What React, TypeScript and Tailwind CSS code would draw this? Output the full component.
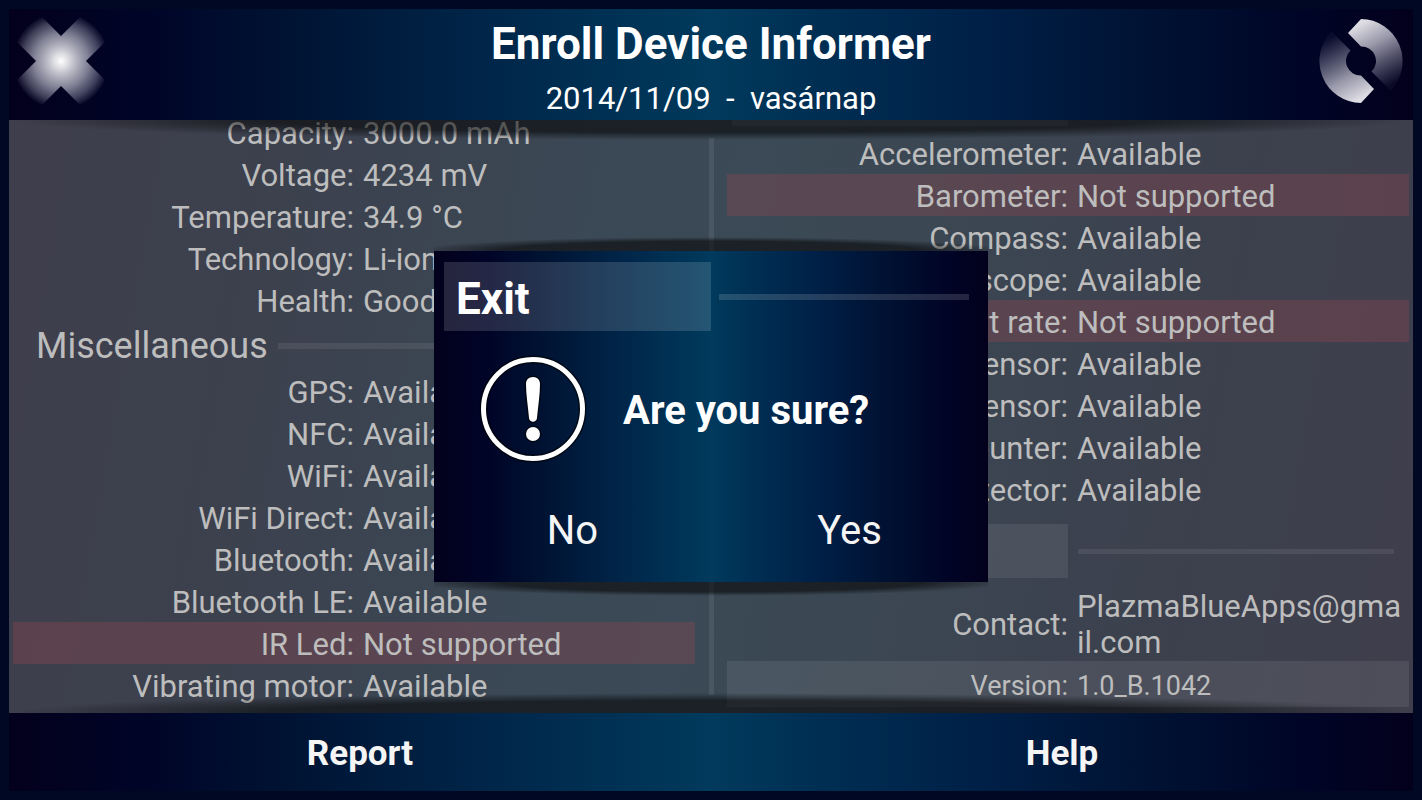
type Entry = {
  label: string;
  value: string;
  missing?: boolean;
};

const BATTERY: Entry[] = [
  { label: "Capacity", value: "3000.0 mAh" },
  { label: "Voltage", value: "4234 mV" },
  { label: "Temperature", value: "34.9 °C" },
  { label: "Technology", value: "Li-ion" },
  { label: "Health", value: "Good" },
];

const MISC: Entry[] = [
  { label: "GPS", value: "Available" },
  { label: "NFC", value: "Available" },
  { label: "WiFi", value: "Available" },
  { label: "WiFi Direct", value: "Available" },
  { label: "Bluetooth", value: "Available" },
  { label: "Bluetooth LE", value: "Available" },
  { label: "IR Led", value: "Not supported", missing: true },
  { label: "Vibrating motor", value: "Available" },
];

const SENSORS: Entry[] = [
  { label: "Accelerometer", value: "Available" },
  { label: "Barometer", value: "Not supported", missing: true },
  { label: "Compass", value: "Available" },
  { label: "Gyroscope", value: "Available" },
  { label: "Heart rate", value: "Not supported", missing: true },
  { label: "Light sensor", value: "Available" },
  { label: "Prox. sensor", value: "Available" },
  { label: "Step counter", value: "Available" },
  { label: "Step detector", value: "Available" },
];

const panelGradient =
  "bg-[linear-gradient(90deg,#03001c_0%,#000528_10%,#001333_20%,#002346_32%,#003053_42%,#003a5c_50%,#002e53_58%,#002047_69%,#001132_82%,#000527_92%,#03001c_100%)]";

function EntryList({ entries }: { entries: Entry[] }) {
  return (
    <dl>
      {entries.map((entry) => (
        <div
          key={entry.label}
          className={`grid h-[42px] grid-cols-2 items-center pt-1 text-[31px] leading-9 whitespace-nowrap ${
            entry.missing ? "bg-[#b44650]/25" : ""
          }`}
        >
          <dt className="text-right">{entry.label}:</dt>
          <dd className="pl-[9px]">{entry.value}</dd>
        </div>
      ))}
    </dl>
  );
}

function CloseIcon() {
  return (
    <svg viewBox="-48 -48 96 96" className="size-24" aria-hidden>
      <defs>
        <radialGradient id="close-fill" gradientUnits="userSpaceOnUse" cx="0" cy="0" r="49">
          <stop offset="0" stopColor="#fff" />
          <stop offset="0.15" stopColor="#dcdce2" />
          <stop offset="0.55" stopColor="#b4b4c4" stopOpacity="0.72" />
          <stop offset="0.8" stopColor="#a8a8bc" stopOpacity="0.38" />
          <stop offset="1" stopColor="#a0a0b4" stopOpacity="0" />
        </radialGradient>
      </defs>
      <path
        fill="url(#close-fill)"
        d="M0-25 19-44A48 48 0 0 1 44-19L25 0 44 19A48 48 0 0 1 19 44L0 25-19 44A48 48 0 0 1-44 19L-25 0-44-19A48 48 0 0 1-19-44Z"
      />
    </svg>
  );
}

function RefreshIcon() {
  const half = "M0-42-13-28 0-14.5A14.5 14.5 0 0 1 10.5 10.5L29.5 29.5A42 42 0 0 0 0-42Z";
  return (
    <svg viewBox="-48 -48 96 96" className="size-24" aria-hidden>
      <defs>
        <linearGradient id="refresh-fill" gradientUnits="userSpaceOnUse" x1="-6" y1="-34" x2="26" y2="26">
          <stop offset="0" stopColor="#dedde4" />
          <stop offset="0.35" stopColor="#b4b3c2" stopOpacity="0.85" />
          <stop offset="0.7" stopColor="#9a99ae" stopOpacity="0.45" />
          <stop offset="1" stopColor="#8c8ca6" stopOpacity="0.06" />
        </linearGradient>
      </defs>
      <path fill="url(#refresh-fill)" d={half} />
      <path fill="url(#refresh-fill)" d={half} transform="rotate(180)" />
    </svg>
  );
}

function WarningIcon() {
  return (
    <svg viewBox="-54 -54 108 108" className="size-[108px]" aria-hidden>
      <circle r="49.5" fill="none" stroke="#000" strokeOpacity="0.6" strokeWidth="8" />
      <circle r="49.5" fill="none" stroke="#fff" strokeWidth="5" />
      <g fill="#fff" stroke="#000" strokeOpacity="0.6" strokeWidth="3" paintOrder="stroke">
        <path d="M0-32C4.500-32 7-29 7-25C7-14 5-3 4 9C3.500 14-3.500 14-4 9C-5-3-7-14-7-25C-7-29-4.500-32 0-32Z" />
        <circle cy="25" r="7" />
      </g>
    </svg>
  );
}

export default function App() {
  return (
    <div className="flex h-screen flex-col bg-[#000823] p-[9px] font-[Roboto,sans-serif] text-white">
      <header className={`flex h-[111px] shrink-0 items-start justify-between p-1 ${panelGradient}`}>
        <button type="button" aria-label="Exit">
          <CloseIcon />
        </button>
        <div className="text-center">
          <h1 className="text-[44px] leading-[62px] font-bold">Enroll Device Informer</h1>
          <p className="text-[31px] leading-[48px] whitespace-pre">2014/11/09  -  vasárnap</p>
        </div>
        <button type="button" aria-label="Refresh">
          <RefreshIcon />
        </button>
      </header>

      <main className="relative min-h-0 flex-1 overflow-hidden bg-[linear-gradient(100deg,#3f3e4c_0%,#3c414e_20%,#3b4855_40%,#3b4a56_50%,#3b4753_62%,#3c414e_80%,#3f3e4c_100%)]">
        <div className="flex h-full px-1 text-[#bdbdbd]">
          <section className="-mt-[9px] flex-1">
            <EntryList entries={BATTERY} />
            <div className="flex h-[49px] items-center pr-[15px] pl-[23px]">
              <h2 className="text-[36px]">Miscellaneous</h2>
              <div className="ml-[10px] h-[6px] flex-1 bg-white/8" />
            </div>
            <EntryList entries={MISC} />
          </section>

          <div className="my-[18px] mr-[13px] ml-[14px] w-[5px] bg-white/8" />

          <section className="flex-1">
            <div className="ml-[5px] h-[6px] w-[336px] bg-white/8" />
            <div className="pt-[6px]">
              <EntryList entries={SENSORS} />
            </div>
            <div className="grid grid-cols-2 items-center pt-[14px] pb-[7px]">
              <h2 className="ml-[5px] h-[54px] bg-white/8 pl-[5px] text-[36px]">Info</h2>
              <div className="mr-[15px] ml-[10px] h-[5px] bg-white/8" />
            </div>
            <dl>
              <div className="grid h-[76px] grid-cols-2 items-center pt-[3px] text-[31px] leading-9">
                <dt className="text-right">Contact:</dt>
                <dd className="pr-1 pl-[9px] break-all">PlazmaBlueApps@gmail.com</dd>
              </div>
              <div className="grid h-[46px] grid-cols-2 items-center bg-white/8 pt-[3px] text-[27px] leading-9">
                <dt className="text-right">Version:</dt>
                <dd className="pl-[9px]">1.0_B.1042</dd>
              </div>
            </dl>
          </section>
        </div>

        {/* curved shadows cast by the two bars */}
        <div className="pointer-events-none absolute inset-x-0 top-0 h-5 bg-[radial-gradient(ellipse_50%_100%_at_50%_0,#0000008c_62%,transparent_100%)]" />
        <div className="pointer-events-none absolute inset-x-0 bottom-0 h-5 bg-[radial-gradient(ellipse_50%_100%_at_50%_100%,#0000008c_62%,transparent_100%)]" />

        <div className="absolute inset-0 flex items-center justify-center">
          <div className="w-[554px] max-w-full">
            <div className="-mt-[14px] h-[14px] bg-[radial-gradient(ellipse_54%_100%_at_50%_100%,#0000008c_70%,transparent_100%)]" />
            <div role="dialog" aria-modal="true" aria-labelledby="exit-title" className={panelGradient}>
              <div className="flex items-center pt-[11px] pr-[19px] pl-[10px]">
                <h2
                  id="exit-title"
                  className="h-[69px] w-[267px] bg-white/14 pl-3 text-[44px] leading-[74px] font-bold"
                >
                  Exit
                </h2>
                <div className="ml-2 h-[6px] flex-1 bg-white/14" />
              </div>
              <div className="flex items-center gap-9 pt-6 pl-[45px]">
                <WarningIcon />
                <p className="pt-1 text-[40px] font-bold">Are you sure?</p>
              </div>
              <div className="grid h-[119px] grid-cols-2 pt-4 text-[40px] text-[#f5f5f5]">
                <button type="button">No</button>
                <button type="button">Yes</button>
              </div>
            </div>
            <div className="-mb-[14px] h-[14px] bg-[radial-gradient(ellipse_54%_100%_at_50%_0,#0000008c_70%,transparent_100%)]" />
          </div>
        </div>
      </main>

      <footer
        className={`grid h-[78px] shrink-0 grid-cols-2 pt-1 text-[35px] font-bold text-[#f5f5f5] ${panelGradient}`}
      >
        <button type="button">Report</button>
        <button type="button">Help</button>
      </footer>
    </div>
  );
}
